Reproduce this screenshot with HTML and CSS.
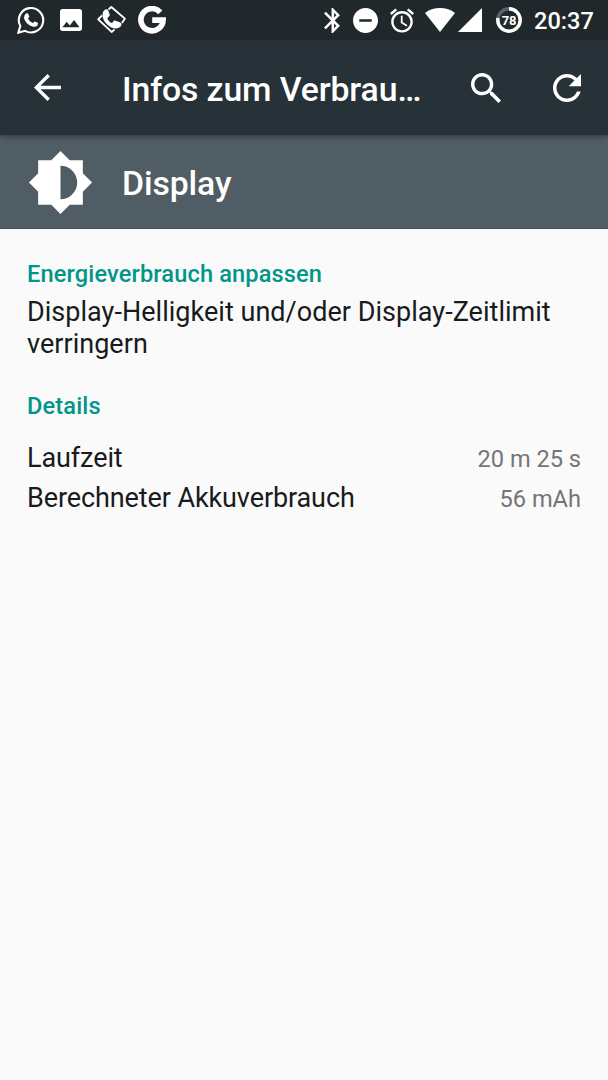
FILE: index.html
```html
<!DOCTYPE html>
<html lang="de">
  <head>
    <meta charset="UTF-8" />
    <meta name="viewport" content="width=device-width, initial-scale=1.0" />
    <title>Infos zum Verbrauch</title>
    <link rel="stylesheet" href="styles.css">
  </head>
  <body>
    <div class="statusbar">
      <svg class="whatsapp" viewBox="0 0 28 28">
        <path d="M1.3 26.7L3.3 20A12.2 12.2 0 1 1 8 24.8z" fill="none" stroke="#fff" stroke-width="2.1" />
        <path d="M9.7 7.3c.6-.2 1.1-.1 1.4.5l1.2 2.8c.2.6-.9 1.5-1.2 2 .9 2 2.7 3.6 4.9 4.5.6-.6 1.2-1.9 1.9-1.6l2.7 1.3c.7.4.2 2.2-.4 2.9-1.2 1.2-3 1.4-4.8.8-4.2-1.5-7-4.3-8.2-7.6-.6-2.1.7-4.9 2.5-5.6z" />
      </svg>
      <svg class="image" viewBox="3 3 18 18">
        <path d="M21 19V5c0-1.100-.9-2-2-2H5c-1.100 0-2 .9-2 2v14c0 1.100.9 2 2 2h14c1.100 0 2-.9 2-2zM8.500 13.500l2.500 3.010L14.500 12l4.500 6H5l3.500-4.500z" />
      </svg>
      <svg class="call" viewBox="0 0 30 28">
        <g fill="none" stroke="#fff" stroke-width="1.9" stroke-linejoin="round">
          <path d="M11.5 3.5L14.3 1 27.9 12.6 25 17" />
          <path d="M5 9.5L1.2 13.4 14.6 25.9 17.5 23.5" />
        </g>
        <path d="M7.300 4.200C8.700 3 10.600 3 11.200 4.400L12.700 8.600C13.200 10.300 11.200 11 10.400 12.400 11 14.600 12.800 16.300 15 17 16.100 16.300 16.300 14.100 18 14.500L23.300 16.500C25 17.300 24.700 19.200 23.600 20.400 21.300 22.900 17.200 23 13.500 20.900 8.800 18.300 5.700 13.900 5.500 9.100 5.400 7.200 6 5.300 7.300 4.200z" />
      </svg>
      <svg class="google" viewBox="0 0 28 28">
        <path d="M22.3 6.3A11.1 11.1 0 1 0 25.1 14.1H14.2" fill="none" stroke="#fff" stroke-width="5.6" />
      </svg>

      <svg class="bluetooth" viewBox="5 2 12.710 20">
        <path d="M17.710 7.710L12 2h-1v7.590L6.410 5 5 6.410 10.590 12 5 17.590 6.410 19 11 14.410V22h1l5.710-5.710-4.300-4.290 4.300-4.290zM13 5.830l1.880 1.880L13 9.590V5.830zm1.880 10.460L13 18.170v-3.760l1.880 1.880z" />
      </svg>
      <svg class="dnd" viewBox="2 2 20 20">
        <path d="M12 2C6.480 2 2 6.480 2 12s4.480 10 10 10 10-4.480 10-10S17.520 2 12 2zm5 11H7v-2h10v2z" />
      </svg>
      <svg class="alarm" viewBox="2 1.800 20 20.200">
        <path d="M22 5.720l-4.600-3.860-1.290 1.530 4.600 3.860L22 5.720zM7.880 3.390L6.600 1.860 2 5.710l1.290 1.530 4.590-3.850zM12.500 8H11v6l4.750 2.850.75-1.230-4-2.370V8zM12 4c-4.970 0-9 4.030-9 9s4.020 9 9 9c4.970 0 9-4.030 9-9s-4.030-9-9-9zm0 16c-3.870 0-7-3.130-7-7s3.130-7 7-7 7 3.130 7 7-3.130 7-7 7z" />
      </svg>
      <svg class="wifi" viewBox="0 0 30 24">
        <path d="M15 24L0 5C4 1.700 9.200 0 15 0s11 1.700 15 5z" />
      </svg>
      <svg class="signal" viewBox="0 0 24 24">
        <path d="M0 24H24V0z" />
      </svg>
      <svg class="battery" viewBox="0 0 26 26">
        <circle class="ring" cx="13" cy="13" r="11.200" />
        <circle class="level" cx="13" cy="13" r="11.200" pathLength="100" stroke-dasharray="78 22" transform="rotate(-90 13 13)" />
        <text x="13" y="17.500" text-anchor="middle">78</text>
      </svg>
      <span class="clock">20:37</span>
    </div>

    <header class="toolbar">
      <svg class="back" viewBox="4 4 16 16">
        <path d="M20 11H7.830l5.590-5.590L12 4l-8 8 8 8 1.410-1.410L7.830 13H20v-2z" />
      </svg>
      <h1>Infos zum Verbrau…</h1>
      <svg class="search" viewBox="3 3 17.490 17.490">
        <path d="M15.500 14h-.79l-.28-.27C15.410 12.590 16 11.110 16 9.500 16 5.910 13.090 3 9.500 3S3 5.910 3 9.500 5.910 16 9.500 16c1.610 0 3.090-.59 4.230-1.570l.27.28v.79l5 4.990L20.490 19l-4.990-5zm-6 0C7.010 14 5 11.990 5 9.500S7.010 5 9.500 5 14 7.010 14 9.500 11.990 14 9.500 14z" />
      </svg>
      <svg class="refresh" viewBox="4 4 16 16">
        <path d="M17.650 6.350C16.200 4.900 14.210 4 12 4c-4.420 0-7.990 3.580-7.990 8s3.570 8 7.990 8c3.730 0 6.840-2.550 7.730-6h-2.080c-.82 2.330-3.040 4-5.650 4-3.310 0-6-2.690-6-6s2.690-6 6-6c1.660 0 3.140.69 4.220 1.780L13 11h7V4l-2.350 2.350z" />
      </svg>
    </header>

    <div class="entry">
      <svg class="brightness" viewBox="0 0 24 24">
        <path d="M20 15.310L23.310 12 20 8.690V4h-4.690L12 .69 8.690 4H4v4.690L.69 12 4 15.310V20h4.690L12 23.310 15.310 20H20v-4.690zM12 18V6c3.310 0 6 2.690 6 6s-2.690 6-6 6z" />
      </svg>
      <h2>Display</h2>
    </div>

    <main>
      <h3>Energieverbrauch anpassen</h3>
      <p class="tip">Display-Helligkeit und/oder Display-Zeitlimit verringern</p>
      <h3>Details</h3>
      <div class="details">
        <div class="row">
          <span>Laufzeit</span>
          <span class="value">20 m 25 s</span>
        </div>
        <div class="row">
          <span>Berechneter Akkuverbrauch</span>
          <span class="value">56 mAh</span>
        </div>
      </div>
    </main>
  </body>
</html>
```

FILE: styles.css
```css
* {
  box-sizing: border-box;
}

body {
  margin: 0;
  min-height: 100vh;
  background-color: #fafafa;
  color: #171b1d;
  font-family: Roboto, "Liberation Sans", sans-serif;
}

h1, h2, h3, p {
  margin: 0;
  font-weight: 500;
}

svg {
  display: block;
  flex: none;
  fill: #fff;
}

/* status bar */
.statusbar {
  display: flex;
  align-items: center;
  height: 40px;
  padding-left: 17px;
  background-color: #21282c;
  color: #fff;
}

.whatsapp {
  width: 28px;
  height: 28px;
}

.image {
  width: 22px;
  height: 22px;
  margin-left: 15px;
}

.call {
  width: 30px;
  height: 28px;
  margin-left: 15px;
}

.google {
  width: 28px;
  height: 28px;
  margin-left: 11px;
}

.bluetooth {
  width: 16px;
  height: 25px;
  margin-left: 158px;
}

.dnd {
  width: 25px;
  height: 25px;
  margin-left: 13px;
}

.alarm {
  width: 24px;
  height: 25px;
  margin-left: 12px;
}

.wifi {
  width: 30px;
  height: 24px;
  margin-left: 11px;
}

.signal {
  width: 24px;
  height: 24px;
  margin-left: 3px;
}

.battery {
  width: 26px;
  height: 26px;
  margin-left: 14px;
}

.battery circle {
  fill: none;
  stroke-width: 3.4;
}

.battery .ring {
  stroke: #596267;
}

.battery .level {
  stroke: #fff;
}

.battery text {
  font-size: 13px;
  font-weight: 700;
  letter-spacing: -0.3px;
}

.clock {
  padding-top: 2px;
  margin-left: 12px;
  font-size: 23.6px;
  font-weight: 500;
}

/* toolbar */
.toolbar {
  position: relative;
  display: flex;
  align-items: center;
  height: 95px;
  padding: 0 27px 0 34px;
  background-color: #273238;
  color: #fff;
  box-shadow: 0 2px 5px rgba(0, 0, 0, 0.35);
}

.back {
  width: 27px;
  height: 27px;
}

.toolbar h1 {
  width: 304px;
  padding-top: 4px;
  margin-left: 61px;
  font-size: 33.8px;
  letter-spacing: -0.12px;
  white-space: nowrap;
}

.search {
  width: 30px;
  height: 30px;
  margin-left: 45px;
}

.refresh {
  width: 28px;
  height: 28px;
  margin-left: auto;
}

.entry {
  display: flex;
  align-items: center;
  height: 94px;
  padding: 1px 0 0 27px;
  border-bottom: 1px solid #48545a;
  background-color: #505d64;
  color: #fff;
}

.brightness {
  width: 67px;
  height: 67px;
  margin-top: 1px;
}

.entry h2 {
  padding-top: 2px;
  margin-left: 28px;
  font-size: 33.8px;
  letter-spacing: -0.12px;
}

/* content */
main {
  padding: 31px 27px 0;
}

h3 {
  color: #009688;
  font-size: 23.6px;
  letter-spacing: 0.13px;
  line-height: 28px;
}

.tip {
  margin: 8px 0 32px;
  font-size: 27px;
  font-weight: 400;
  letter-spacing: 0.03px;
  line-height: 32px;
}

.details {
  margin-top: 18px;
}

.row {
  display: flex;
  justify-content: space-between;
  align-items: baseline;
  height: 40px;
  font-size: 27px;
  letter-spacing: -0.1px;
  line-height: 40px;
}

.value {
  color: #737677;
  font-size: 23.6px;
  letter-spacing: 0;
}
```
